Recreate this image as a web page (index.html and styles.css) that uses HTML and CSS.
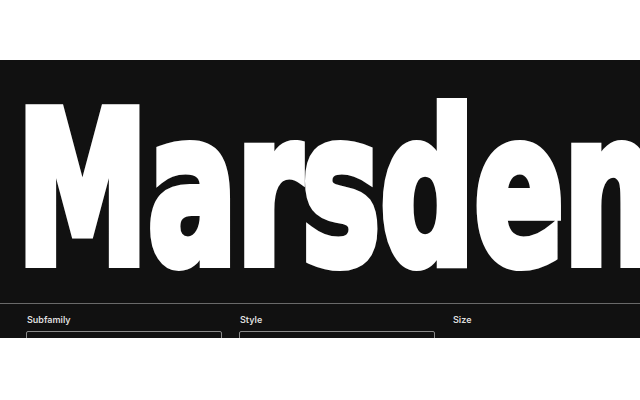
FILE: index.html
```html
<!DOCTYPE html>
<html>
<head>
<meta charset="utf-8">
<link rel="stylesheet" href="styles.css">
</head>
<body>
<div class="top-space"></div>
<section class="specimen">
  <div class="hero">
    <span class="hero-text">Marsden</span>
  </div>
  <div class="controls">
    <div class="field">
      <label class="label">Subfamily</label>
      <div class="box"></div>
    </div>
    <div class="field">
      <label class="label">Style</label>
      <div class="box"></div>
    </div>
    <div class="field">
      <label class="label">Size</label>
      <div class="box box-none"></div>
    </div>
  </div>
</section>
</body>
</html>
```

FILE: styles.css
```css
html, body {
  margin: 0;
  padding: 0;
  background: #ffffff;
}
.top-space {
  height: 60px;
}
.specimen {
  background: #111111;
  height: 278px;
  overflow: hidden;
}
.hero {
  height: 244px;
  overflow: hidden;
  border-bottom: 1px solid #6a6a6a;
  box-sizing: border-box;
  padding: 26px 0 0 17px;
  white-space: nowrap;
}
.hero-text {
  display: inline-block;
  font-family: "DejaVu Sans", sans-serif;
  font-stretch: condensed;
  font-weight: bold;
  font-size: 124px;
  line-height: 124px;
  color: #ffffff;
  white-space: nowrap;
  -webkit-text-stroke: 6px #ffffff;
  transform: scale(1.18, 1.69);
  transform-origin: left top;
}
.controls {
  display: flex;
  gap: 17px;
  padding: 10px 0 0 26px;
}
.field {
  width: 196px;
  flex-shrink: 0;
  display: flex;
  flex-direction: column;
  gap: 6px;
}
.label {
  font-family: Inter, "Liberation Sans", sans-serif;
  font-size: 9px;
  font-weight: 600;
  color: #dddddd;
  padding-left: 1px;
  line-height: 11px;
}
.box {
  height: 30px;
  border: 1px solid #8a8a8a;
  border-radius: 2px;
}
.box-none {
  border-color: transparent;
}
```
